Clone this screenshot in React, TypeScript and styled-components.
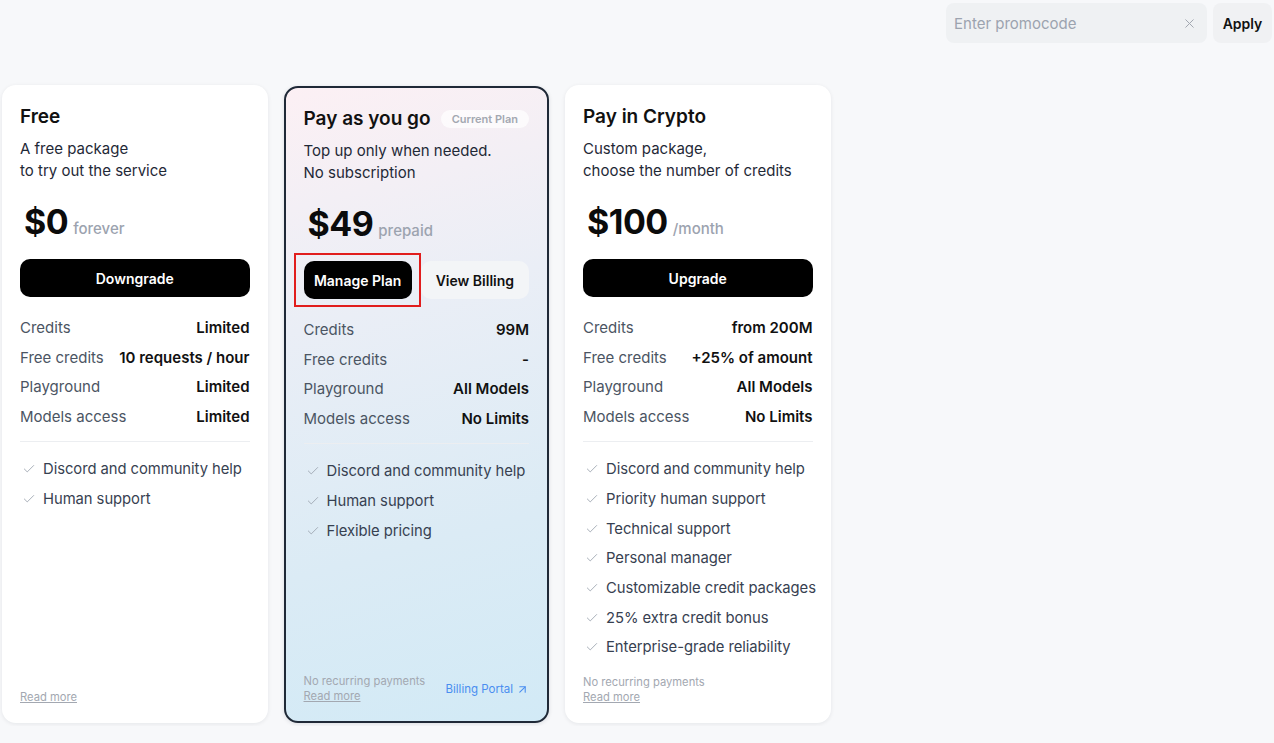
import React from "react";
import styled, { createGlobalStyle, css } from "styled-components";
import { Check, X, ArrowUpRight } from "lucide-react";

const GlobalStyle = createGlobalStyle`
  body {
    margin: 0;
    background: #f7f8fa;
    font-family: Inter, "Noto Sans", "Liberation Sans", sans-serif;
    color: #111;
  }
`;

interface Row {
  label: string;
  value: string;
}

interface Plan {
  name: string;
  description: string[];
  price: string;
  unit: string;
  rows: Row[];
  features: string[];
  current?: boolean;
}

const plans: Plan[] = [
  {
    name: "Free",
    description: ["A free package", "to try out the service"],
    price: "$0",
    unit: "forever",
    rows: [
      { label: "Credits", value: "Limited" },
      { label: "Free credits", value: "10 requests / hour" },
      { label: "Playground", value: "Limited" },
      { label: "Models access", value: "Limited" },
    ],
    features: ["Discord and community help", "Human support"],
  },
  {
    name: "Pay as you go",
    description: ["Top up only when needed.", "No subscription"],
    price: "$49",
    unit: "prepaid",
    rows: [
      { label: "Credits", value: "99M" },
      { label: "Free credits", value: "-" },
      { label: "Playground", value: "All Models" },
      { label: "Models access", value: "No Limits" },
    ],
    features: ["Discord and community help", "Human support", "Flexible pricing"],
    current: true,
  },
  {
    name: "Pay in Crypto",
    description: ["Custom package,", "choose the number of credits"],
    price: "$100",
    unit: "/month",
    rows: [
      { label: "Credits", value: "from 200M" },
      { label: "Free credits", value: "+25% of amount" },
      { label: "Playground", value: "All Models" },
      { label: "Models access", value: "No Limits" },
    ],
    features: [
      "Discord and community help",
      "Priority human support",
      "Technical support",
      "Personal manager",
      "Customizable credit packages",
      "25% extra credit bonus",
      "Enterprise-grade reliability",
    ],
  },
];

const Page = styled.div`
  padding: 3px 2px;
`;

const TopBar = styled.div`
  display: flex;
  justify-content: flex-end;
  gap: 6px;
  height: 40px;
`;

const PromoField = styled.div`
  width: 261px;
  height: 40px;
  box-sizing: border-box;
  display: flex;
  align-items: center;
  justify-content: space-between;
  padding: 0 10px 0 8px;
  background: #eff1f3;
  border-radius: 8px;
  color: #9ca3af;
  font-size: 15px;
`;

const ApplyButton = styled.button`
  width: 59px;
  height: 40px;
  border: none;
  border-radius: 8px;
  background: #f0f1f3;
  font-family: inherit;
  font-size: 14px;
  font-weight: 600;
  color: #111;
`;

const Cards = styled.div`
  display: grid;
  grid-template-columns: repeat(3, 265.5px);
  gap: 16px;
  margin-top: 42px;
`;

const Card = styled.div<{ $current?: boolean }>`
  min-height: 638px;
  box-sizing: border-box;
  display: flex;
  flex-direction: column;
  padding: 19px 18px 18px;
  border-radius: 14px;
  background: #fff;
  box-shadow: 0 1px 4px rgba(15, 23, 42, 0.08);
  ${({ $current }) =>
    $current &&
    css`
      border: 2px solid #1f2937;
      padding: 18px 18px 17px;
      background: linear-gradient(165deg, #fcf0f4 0%, #eaeef6 35%, #dbebf5 70%, #d2eaf6 100%);
      box-shadow: 0 1px 4px rgba(15, 23, 42, 0.12);
      min-height: 636px;
      margin-top: 1px;
    `}
`;

const TitleRow = styled.div`
  display: flex;
  align-items: center;
  justify-content: space-between;
  height: 25px;
`;

const Title = styled.h2`
  margin: 0;
  font-size: 19px;
  font-weight: 600;
  color: #111;
`;

const Badge = styled.span`
  padding: 2px 11px;
  border-radius: 9px;
  background: rgba(255, 255, 255, 0.7);
  color: #a3a8b1;
  font-size: 11px;
  font-weight: 600;
`;

const Description = styled.p`
  margin: 9px 0 0;
  font-size: 15px;
  line-height: 22px;
  color: #1f2937;
`;

const PriceLine = styled.div`
  display: flex;
  align-items: baseline;
  gap: 5px;
  margin-top: 19px;
  padding-left: 4px;
  height: 44px;
`;

const Price = styled.span`
  font-size: 34px;
  font-weight: 700;
  letter-spacing: -0.5px;
  color: #0b0b0b;
`;

const Unit = styled.span`
  font-size: 15px;
  color: #9ca3af;
  font-weight: 500;
`;

const Actions = styled.div`
  display: flex;
  gap: 9px;
  margin-top: 14px;
`;

const ActionButton = styled.button<{ $variant: "dark" | "light"; $marked?: boolean }>`
  flex: 1;
  height: 38px;
  border: none;
  border-radius: 10px;
  font-family: inherit;
  font-size: 14px;
  font-weight: 600;
  background: ${({ $variant }) => ($variant === "dark" ? "#000" : "#f3f5f7")};
  color: ${({ $variant }) => ($variant === "dark" ? "#fff" : "#111")};
  ${({ $marked }) =>
    $marked &&
    css`
      position: relative;
      z-index: 1;
      &::after {
        content: "";
        position: absolute;
        inset: -8px -9px -8px -10px;
        border: 2px solid #e11d1d;
        pointer-events: none;
      }
    `}
`;

const Rows = styled.div`
  display: flex;
  flex-direction: column;
  margin-top: 16px;
`;

const RowItem = styled.div`
  display: flex;
  justify-content: space-between;
  align-items: center;
  height: 29.6px;
  font-size: 15px;
  white-space: nowrap;
`;

const RowLabel = styled.span`
  color: #4b5563;
`;

const RowValue = styled.span`
  color: #111;
  font-weight: 600;
`;

const Divider = styled.hr`
  margin: 10px 0 12px;
  border: none;
  border-top: 1px solid #eceef1;
`;

const Features = styled.ul`
  list-style: none;
  padding: 0;
  margin: 0;
`;

const Feature = styled.li`
  display: flex;
  align-items: center;
  gap: 7px;
  height: 29.7px;
  padding-left: 2px;
  font-size: 14.8px;
  letter-spacing: -0.05px;
  white-space: nowrap;
  color: #374151;

  svg {
    flex-shrink: 0;
  }
`;

const Footer = styled.div`
  margin-top: auto;
  display: flex;
  align-items: center;
  justify-content: space-between;
`;

const FooterNote = styled.div`
  display: flex;
  flex-direction: column;
  font-size: 11.2px;
  line-height: 15px;
  color: #a3a8b1;
`;

const ReadMore = styled.a`
  color: #a3a8b1;
  text-decoration: underline;
  cursor: pointer;
`;

const PortalLink = styled.a`
  display: flex;
  align-items: center;
  gap: 3px;
  font-size: 11.5px;
  color: #4a8ef0;
  cursor: pointer;
`;

export default function App() {
  return (
    <Page>
      <GlobalStyle />
      <TopBar>
        <PromoField>
          <span>Enter promocode</span>
          <X size={15} strokeWidth={1.6} color="#a3a8b1" />
        </PromoField>
        <ApplyButton>Apply</ApplyButton>
      </TopBar>
      <Cards>
        {plans.map((plan) => (
          <Card key={plan.name} $current={plan.current}>
            <TitleRow>
              <Title>{plan.name}</Title>
              {plan.current && <Badge>Current Plan</Badge>}
            </TitleRow>
            <Description>
              {plan.description[0]}
              <br />
              {plan.description[1]}
            </Description>
            <PriceLine>
              <Price>{plan.price}</Price>
              <Unit>{plan.unit}</Unit>
            </PriceLine>
            <Actions>
              {plan.current ? (
                <>
                  <ActionButton $variant="dark" $marked>
                    Manage Plan
                  </ActionButton>
                  <ActionButton $variant="light">View Billing</ActionButton>
                </>
              ) : (
                <ActionButton $variant="dark">
                  {plan.name === "Free" ? "Downgrade" : "Upgrade"}
                </ActionButton>
              )}
            </Actions>
            <Rows>
              {plan.rows.map((row) => (
                <RowItem key={row.label}>
                  <RowLabel>{row.label}</RowLabel>
                  <RowValue>{row.value}</RowValue>
                </RowItem>
              ))}
            </Rows>
            <Divider />
            <Features>
              {plan.features.map((f) => (
                <Feature key={f}>
                  <Check size={14} strokeWidth={1.5} color="#9ca3af" />
                  {f}
                </Feature>
              ))}
            </Features>
            <Footer>
              <FooterNote>
                {plan.name !== "Free" && <span>No recurring payments</span>}
                <ReadMore>Read more</ReadMore>
              </FooterNote>
              {plan.current && (
                <PortalLink>
                  Billing Portal <ArrowUpRight size={13} strokeWidth={2} />
                </PortalLink>
              )}
            </Footer>
          </Card>
        ))}
      </Cards>
    </Page>
  );
}
